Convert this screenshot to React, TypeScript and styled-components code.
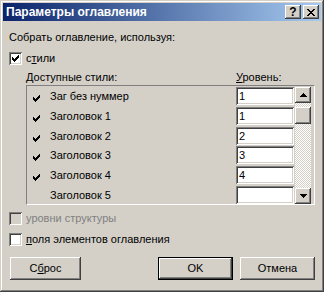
import styled, { createGlobalStyle } from "styled-components";

const face = "#D4D0C8";
const shadow = "#808080";
const dark = "#404040";

const GlobalStyle = createGlobalStyle`
  html, body {
    margin: 0;
    padding: 0;
    background: ${face};
  }
  body {
    font-family: "Liberation Sans", Arial, sans-serif;
    font-size: 11px;
    color: #000;
  }
`;

const raised = `
  box-shadow: inset -1px -1px ${dark}, inset 1px 1px #fff,
    inset -2px -2px ${shadow}, inset 2px 2px ${face};
`;

const sunken = `
  box-shadow: inset 1px 1px ${shadow}, inset -1px -1px #fff,
    inset 2px 2px ${dark}, inset -2px -2px ${face};
`;

const Window = styled.div`
  width: 324px;
  height: 292px;
  box-sizing: border-box;
  padding: 3px;
  background: ${face};
  box-shadow: inset -1px -1px ${dark}, inset 1px 1px ${face},
    inset -2px -2px ${shadow}, inset 2px 2px #fff;
  display: flex;
  flex-direction: column;
`;

const TitleBar = styled.div`
  height: 18px;
  display: flex;
  align-items: center;
  padding: 0 2px 0 3px;
  background: linear-gradient(to right, #0a246a, #a6caf0);
`;

const Title = styled.div`
  flex: 1;
  color: #fff;
  font-weight: bold;
  font-size: 12px;
  line-height: 18px;
  white-space: nowrap;
`;

const CaptionButton = styled.div`
  width: 16px;
  height: 14px;
  margin-left: 2px;
  background: ${face};
  ${raised}
  display: flex;
  align-items: center;
  justify-content: center;
  font-weight: bold;
  font-size: 12px;
  line-height: 14px;
`;

const Body = styled.div`
  flex: 1;
  display: flex;
  flex-direction: column;
  padding: 0 6px 0 6px;
`;

const Caption = styled.div`
  margin-top: 10px;
  line-height: 13px;
  white-space: nowrap;
`;

const CheckRow = styled.div<{ $top: number }>`
  display: flex;
  align-items: center;
  margin-top: ${(p) => p.$top}px;
  height: 13px;
`;

const Box = styled.div<{ $disabled?: boolean }>`
  width: 13px;
  height: 13px;
  box-sizing: border-box;
  background: ${(p) => (p.$disabled ? face : "#fff")};
  ${sunken}
  display: flex;
  align-items: center;
  justify-content: center;
`;

const CheckLabel = styled.span<{ $disabled?: boolean }>`
  margin-left: 4px;
  line-height: 13px;
  white-space: nowrap;
  color: ${(p) => (p.$disabled ? shadow : "#000")};
`;

const Group = styled.div`
  margin-left: 17px;
  margin-top: 6px;
`;

const GroupHeader = styled.div`
  display: grid;
  grid-template-columns: 210px 1fr;
  line-height: 13px;
  white-space: nowrap;
`;

const ListBox = styled.div`
  margin-top: 1px;
  height: 120px;
  box-sizing: border-box;
  border: 1px solid;
  border-color: ${shadow} #fff #fff ${shadow};
  display: flex;
  overflow: hidden;
`;

const Rows = styled.div`
  flex: 1;
  padding-top: 1px;
`;

const StyleRow = styled.div`
  height: 19.8px;
  display: flex;
  align-items: flex-start;
`;

const RowMark = styled.div`
  width: 7px;
  height: 7px;
  margin: 5px 10px 0 6px;
`;

const RowName = styled.div`
  flex: 1;
  line-height: 18px;
  white-space: nowrap;
`;

const LevelEdit = styled.div`
  width: 58px;
  height: 18px;
  box-sizing: border-box;
  padding-left: 3px;
  background: #fff;
  ${sunken}
  line-height: 18px;
`;

const ScrollBar = styled.div`
  width: 16px;
  margin: 1px 3px 0 1px;
  display: flex;
  flex-direction: column;
`;

const ScrollButton = styled.div<{ $h?: number }>`
  height: ${(p) => p.$h ?? 16}px;
  flex: none;
  background: ${face};
  ${raised}
  display: flex;
  align-items: center;
  justify-content: center;
`;

const Track = styled.div`
  flex: 1;
  padding-top: 4px;
  background: repeating-conic-gradient(#fff 0 25%, ${face} 0 50%) 0 0 / 2px 2px;
`;

const ButtonRow = styled.div`
  margin-top: 11px;
  display: flex;
`;

const Spacer = styled.div`
  flex: 1;
`;

const PushButton = styled.div<{ $w: number; $ml?: number; $default?: boolean }>`
  width: ${(p) => p.$w}px;
  height: 23px;
  margin-left: ${(p) => p.$ml ?? 0}px;
  box-sizing: border-box;
  background: ${face};
  ${(p) =>
    p.$default
      ? `box-shadow: inset 0 0 0 1px #000, inset -2px -2px ${dark}, inset 2px 2px #fff,
    inset -3px -3px ${shadow}, inset 3px 3px ${face};`
      : raised}
  display: flex;
  align-items: center;
  justify-content: center;
  line-height: 13px;
`;

const CHECK =
  "M6 0h1v1h-1zM5 1h2v1h-2zM0 2h1v1h-1zM4 2h3v1h-3zM0 3h2v1h-2zM3 3h3v1h-3zM0 4h5v1h-5zM1 5h3v1h-3zM2 6h1v1h-1z";

function Mark() {
  return (
    <svg width="7" height="7" viewBox="0 0 7 7" shapeRendering="crispEdges">
      <path d={CHECK} fill="#000" />
    </svg>
  );
}

function Arrow({ down }: { down?: boolean }) {
  const d = down
    ? "M0 0h7v1h-7zM1 1h5v1h-5zM2 2h3v1h-3zM3 3h1v1h-1z"
    : "M3 0h1v1h-1zM2 1h3v1h-3zM1 2h5v1h-5zM0 3h7v1h-7z";
  return (
    <svg width="7" height="4" viewBox="0 0 7 4" shapeRendering="crispEdges">
      <path d={d} fill="#000" />
    </svg>
  );
}

function CloseGlyph() {
  return (
    <svg width="8" height="7" viewBox="0 0 8 7" shapeRendering="crispEdges">
      <path
        d="M0 0h2v1h-2zM6 0h2v1h-2zM1 1h2v1h-2zM5 1h2v1h-2zM2 2h4v1h-4zM3 3h2v1h-2zM2 4h4v1h-4zM1 5h2v1h-2zM5 5h2v1h-2zM0 6h2v1h-2zM6 6h2v1h-2z"
        fill="#000"
      />
    </svg>
  );
}

const styles = [
  { name: "Заг без нуммер", level: "1", on: true },
  { name: "Заголовок 1", level: "1", on: true },
  { name: "Заголовок 2", level: "2", on: true },
  { name: "Заголовок 3", level: "3", on: true },
  { name: "Заголовок 4", level: "4", on: true },
  { name: "Заголовок 5", level: "", on: false },
];

export default function App() {
  return (
    <>
      <GlobalStyle />
      <Window>
        <TitleBar>
          <Title>Параметры оглавления</Title>
          <CaptionButton>?</CaptionButton>
          <CaptionButton>
            <CloseGlyph />
          </CaptionButton>
        </TitleBar>
        <Body>
          <Caption>Собрать оглавление, используя:</Caption>
          <CheckRow $top={8}>
            <Box>
              <Mark />
            </Box>
            <CheckLabel>
              с<u>т</u>или
            </CheckLabel>
          </CheckRow>
          <Group>
            <GroupHeader>
              <span>Доступные стили:</span>
              <span>
                <u>У</u>ровень:
              </span>
            </GroupHeader>
            <ListBox>
              <Rows>
                {styles.map((s, i) => (
                  <StyleRow key={i}>
                    <RowMark>{s.on && <Mark />}</RowMark>
                    <RowName>{s.name}</RowName>
                    <LevelEdit>{s.level}</LevelEdit>
                  </StyleRow>
                ))}
              </Rows>
              <ScrollBar>
                <ScrollButton>
                  <Arrow />
                </ScrollButton>
                <Track>
                  <ScrollButton $h={17} />
                </Track>
                <ScrollButton>
                  <Arrow down />
                </ScrollButton>
              </ScrollBar>
            </ListBox>
          </Group>
          <CheckRow $top={7}>
            <Box $disabled />
            <CheckLabel $disabled>уровни структуры</CheckLabel>
          </CheckRow>
          <CheckRow $top={8}>
            <Box />
            <CheckLabel>
              <u>п</u>оля элементов оглавления
            </CheckLabel>
          </CheckRow>
          <ButtonRow>
            <PushButton $w={71} $ml={1}>
              <span>
                С<u>б</u>рос
              </span>
            </PushButton>
            <Spacer />
            <PushButton $w={75} $default>
              OK
            </PushButton>
            <PushButton $w={75} $ml={7}>
              Отмена
            </PushButton>
          </ButtonRow>
        </Body>
      </Window>
    </>
  );
}
